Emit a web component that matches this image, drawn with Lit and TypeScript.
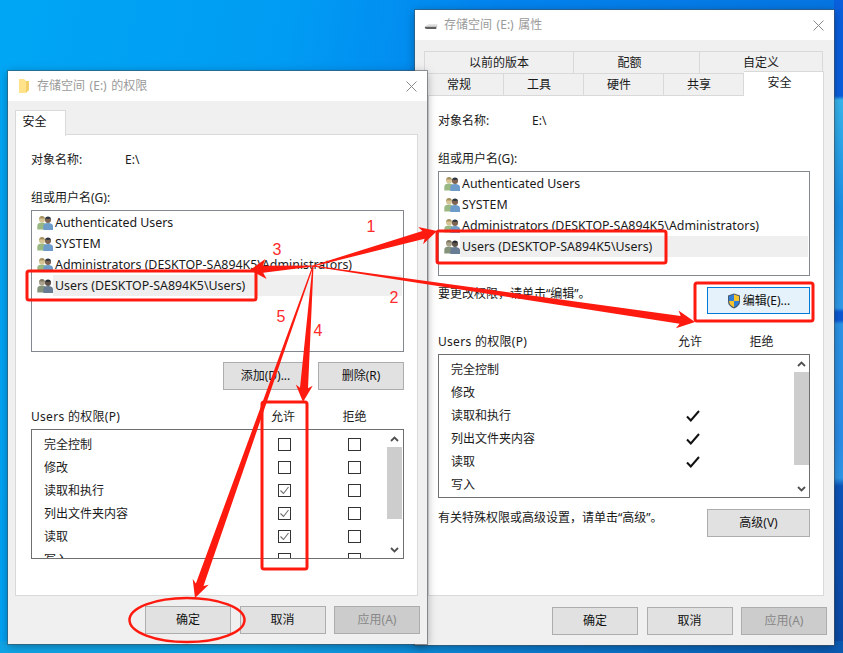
import { LitElement, html, css } from "lit";
import { customElement } from "lit/decorators.js";

const RED = "#ff1a0f";

function arrow(x0: number, y0: number, x1: number, y1: number, shaft: number, head: number, len: number, start = 1) {
  const d = Math.hypot(x1 - x0, y1 - y0);
  const ux = (x1 - x0) / d, uy = (y1 - y0) / d;
  const nx = -uy, ny = ux;
  const bx = x1 - ux * len, by = y1 - uy * len;
  const cx = x1 - ux * (len + 3), cy = y1 - uy * (len + 3);
  const p = [
    [x0 + nx * start / 2, y0 + ny * start / 2],
    [bx + nx * shaft / 2, by + ny * shaft / 2],
    [cx + nx * head / 2, cy + ny * head / 2],
    [x1, y1],
    [cx - nx * head / 2, cy - ny * head / 2],
    [bx - nx * shaft / 2, by - ny * shaft / 2],
    [x0 - nx * start / 2, y0 - ny * start / 2],
  ];
  return p.map((q) => q[0].toFixed(1) + "," + q[1].toFixed(1)).join(" ");
}

const groupIcon = (sel: boolean) => html`<svg class="uicon ${sel ? "dim" : ""}" viewBox="0 0 16 16">
  <circle cx="5" cy="4.500" r="3" fill="#d8c596"/>
  <path d="M2.200 4.500C2 2 3.500 1 5 1s3 1 2.800 3.500L7 3.200C6 3.600 4 3.600 3 3.200z" fill="#a3905f"/>
  <path d="M0.300 14.500V11c0-2.500 2-3.400 4.700-3.400S9.500 8.500 9.500 11v3.500z" fill="#9ab884"/>
  <circle cx="11" cy="5" r="3" fill="#7d6350"/>
  <path d="M8 5C7.800 2.400 9.400 1.400 11 1.400s3.200 1 3 3.600l-.8-1.400c-1.200.4-3.200.4-4.400 0z" fill="#2c3540"/>
  <path d="M6.300 15v-3.500c0-2.600 2-3.500 4.700-3.500s5 .9 5 3.500V15z" fill="#6d9ccb"/>
</svg>`;

const xIcon = html`<svg class="close" viewBox="0 0 11 11"><path d="M.5.5l10 10M10.500.5l-10 10" stroke="#8a8a8a" fill="none"/></svg>`;
const folderIcon = html`<svg class="ticon" viewBox="0 0 12 16"><path d="M1 1h5l2 2v12H1z" fill="#ffe28a"/><path d="M8 3h3v9l-3 3z" fill="#f3cf6a"/></svg>`;
const driveIcon = html`<svg class="ticon" viewBox="0 0 16 16"><path d="M1 10l4-3h10l-1 3z" fill="#dcdcdc"/><path d="M1 10h13v2.500H3l-2-.8z" fill="#5f5f5f"/><path d="M14 10l1-3v2.800l-1 2.700z" fill="#b0b0b0"/></svg>`;
const shield = html`<svg class="shield" viewBox="0 0 14 16">
  <path d="M7 .5L1 2.500v6c0 3.500 3 5.800 6 7 3-1.200 6-3.500 6-7v-6z" fill="#4a5a70"/>
  <path d="M7 1.500L2 3.200V8h5z" fill="#2f7fd6"/><path d="M7 1.500l5 1.700V8H7z" fill="#f7c52b"/>
  <path d="M2 8h5v6.300C4.500 13.200 2.200 11.200 2 8z" fill="#f7c52b"/><path d="M12 8H7v6.300c2.500-1.100 4.800-3.100 5-6.300z" fill="#2f7fd6"/>
</svg>`;
const chevUp = html`<svg class="chev" viewBox="0 0 9 6"><path d="M1 5l3.500-3.500L8 5" fill="none" stroke="#505050" stroke-width="1.800"/></svg>`;
const chevDown = html`<svg class="chev" viewBox="0 0 9 6"><path d="M1 1l3.500 3.500L8 1" fill="none" stroke="#505050" stroke-width="1.800"/></svg>`;
const softCheck = html`<svg viewBox="0 0 11 11" class="tick"><path d="M1.500 5.500l3 3 5-6.500" fill="none" stroke="#6e6e6e" stroke-width="1.100"/></svg>`;
const blackCheck = html`<svg viewBox="0 0 14 12" class="bcheck"><path d="M1 6.500l3.800 4L13 1" fill="none" stroke="#111" stroke-width="2"/></svg>`;

const users = ["Authenticated Users", "SYSTEM", "Administrators (DESKTOP-SA894K5\\Administrators)", "Users (DESKTOP-SA894K5\\Users)"];
const perms = ["完全控制", "修改", "读取和执行", "列出文件夹内容", "读取", "写入"];
const allowed = [false, false, true, true, true, false];

const userList = () => html`<div class="ulist">
  ${users.map((u, i) => html`<div class="urow">${groupIcon(i === 3)}<span class="uname ${i === 3 ? "sel" : ""}">${u}</span></div>`)}
</div>`;

const permHead = html`<div class="phead"><span class="pt">Users 的权限(P)</span><span class="c">允许</span><span class="c">拒绝</span></div>`;
const scrollbar = (cls: string) => html`<div class="sb ${cls}"><div class="sba">${chevUp}</div><div class="thumb"></div><div class="sbs"></div><div class="sba">${chevDown}</div></div>`;

const footer = html`<div class="foot"><button class="b f">确定</button><button class="b f">取消</button><button class="b f dis">应用(A)</button></div>`;

@customElement("app-root")
export class AppRoot extends LitElement {
  static styles = css`
    :host { display: block; position: relative; width: 843px; height: 653px; overflow: hidden;
      font: 12px/16px "Noto Sans", "Noto Sans CJK SC", sans-serif; color: #1a1a1a;
      background:
        linear-gradient(180deg, #0a5fdc 0 96px, #37b6ee 100px, #1a8fe6 210px, #2f9bea 308px, #0a58d4 312px, #0a58d4 320px, #2b95e8 324px, #2b8de8 440px, #2f97e8 478px, #0d55bb 486px, #0b4aa6 640px, #0b4aa6) right top / 9px 100% no-repeat,
        linear-gradient(100deg, #00a6f4 0%, #009cf3 30%, #0383ee 52%, #0770dc 100%); }
    .bottomglow { position: absolute; left: 0; right: 0; bottom: 0; height: 12px;
      background: linear-gradient(90deg, #10a4e6 0 30%, #0b7fd4 60%, #0a5ab2 100%); }
    .win { position: absolute; width: 419px; display: flex; flex-direction: column; background: #f0f0f0;
      box-shadow: 0 0 0 1px rgba(70,80,90,.55), 0 2px 9px rgba(0,0,0,.35); }
    .w1 { left: 415px; top: 10px; height: 635px; }
    .w2 { left: 8px; top: 71px; height: 573px; }
    .tbar { height: 30px; flex: none; background: #fff; display: flex; align-items: center; color: #9a9a9a; padding: 0 9px; gap: 6px; }
    .tbar .t { flex: 1; word-spacing: 1.500px; }
    .ticon { width: 14px; height: 16px; flex: none; }
    .close { width: 11px; height: 11px; flex: none; margin-right: 1px; }

    .tabs { margin-top: 9px; padding-left: 7px; display: flex; height: 25px; flex: none; }
    .tab { width: 51px; background: #fff; border: 1px solid #d9d9d9; border-bottom: 0; box-sizing: border-box; display: flex; align-items: center; justify-content: center; padding: 0 12px 4px 0; color: #111; z-index: 1; height: 26px; }
    .tabs1 { margin: 11px 0 0 9px; flex: none; }
    .trow { display: flex; }
    .t1 { height: 22px; background: #f0f0f0; border: 1px solid #d9d9d9; border-bottom: 0; border-right: 0; box-sizing: border-box; display: flex; align-items: center; justify-content: center; }
    .t2 { width: 80px; height: 23px; background: #f0f0f0; border: 1px solid #d9d9d9; border-left: 0; box-sizing: border-box; display: flex; align-items: center; justify-content: center; padding-right: 9px; }
    .t2.on { background: #fff; height: 25px; margin-top: -2px; z-index: 1; border-bottom: 0; padding: 0 8px 3px 0; }
    .w1w { width: 149px; } .w2w { width: 126px; padding-right: 14px; } .w3w { width: 124px; border-right: 1px solid #d9d9d9; }

    .panel { background: #fff; border: 1px solid #d9d9d9; box-sizing: border-box; padding: 17px 13px 0 15px; }
    .w2 .panel { margin: -1px 0 0 7px; width: 403px; height: 462px; }
    .w1 .panel { margin: -1px 0 0 13px; width: 396px; height: 501px; padding-left: 9px; }
    .obj { display: flex; }
    .obj span:first-child { width: 94px; }
    .lab { margin-top: 22px; }

    .ulist { margin-top: 4px; border: 1px solid #828790; padding: 1px; box-sizing: border-box; height: 142px; }
    .w1 .ulist { height: 105px; }
    .urow { height: 21px; display: flex; align-items: center; padding-left: 4px; }
    .uicon { width: 16px; height: 16px; flex: none; }
    .uicon.dim { filter: grayscale(.45) brightness(.82); }
    .uname { flex: 1; height: 21px; line-height: 21px; padding-left: 2px; white-space: nowrap; font-size: 12.400px; }
    .uname.sel { background: #efefef; }

    .b { font: inherit; color: #111; background: #e1e1e1; border: 1px solid #adadad; box-sizing: border-box; height: 28px; padding: 0; display: flex; align-items: center; justify-content: center; gap: 2px; }
    .btns { margin-top: 10px; display: flex; justify-content: flex-end; gap: 10px; }
    .btns .b { width: 85px; }
    .btns .b.wide { width: 86px; }
    .b.f { width: 86px; }
    .b.dis { background: #ccc; color: #888; }
    .b.side { width: 103px; }
    .b.blue { background: #e5f1fb; border-color: #0078d7; height: 27px; }
    .shield { width: 14px; height: 16px; }

    .phead { display: grid; grid-template-columns: 217px 70px 73px; margin-top: 19px; }
    .w1 .phead { margin-top: 20px; }
    .pt { letter-spacing: .3px; white-space: nowrap; }
    .c { text-align: center; }
    .pbox { margin-top: 4px; border: 1px solid #6f6f6f; box-sizing: border-box; height: 130px; display: flex; overflow: hidden; }
    .w1 .pbox { margin-top: 4px; height: 144px; }
    .prows { width: 355px; flex: none; padding-top: 3px; overflow: hidden; }
    .prow { height: 23px; display: grid; grid-template-columns: 217px 70px 68px; align-items: center; }
    .pn { padding-left: 12px; line-height: 23px; }
    .pc { display: flex; justify-content: center; align-items: center; }
    .pc.deny { padding-left: 2px; }
    .box { width: 13px; height: 13px; border: 1px solid #333; box-sizing: border-box; background: #fff; display: flex; align-items: center; justify-content: center; }
    .tick { width: 11px; height: 11px; }
    .bcheck { width: 14px; height: 12px; margin-left: 4px; }

    .sb { width: 15px; flex: none; display: flex; flex-direction: column; background: #fff; margin-top: 1px; }
    .sba { height: 16px; display: flex; align-items: center; justify-content: center; flex: none; }
    .chev { width: 9px; height: 6px; }
    .thumb { background: #cdcdcd; flex: none; height: 72px; }
    .sb.big .thumb { height: 93px; }
    .sbs { flex: 1; }

    .note { display: flex; justify-content: space-between; margin-top: 11px; }
    .note > span { margin-top: -1px; }
    .note.adv > span { margin-top: 1px; }
    .foot { display: flex; justify-content: flex-end; gap: 8.500px; padding-right: 7px; margin-top: 10px; }
    .w1 .foot { margin-top: 11px; }

    .ink { position: absolute; left: 0; top: 0; width: 843px; height: 653px; pointer-events: none; }
    .ink text { fill: #ff2a2a; font: 16px "Liberation Sans", sans-serif; text-anchor: middle; }
  `;

  private perm(tick: unknown, boxed: boolean) {
    return html`<div class="prows">
      ${perms.map((p, i) => html`<div class="prow"><span class="pn">${p}</span>
        ${boxed
          ? html`<span class="pc"><span class="box">${allowed[i] ? tick : ""}</span></span><span class="pc deny"><span class="box"></span></span>`
          : html`<span class="pc">${allowed[i] ? tick : ""}</span><span></span>`}
      </div>`)}
    </div>`;
  }

  render() {
    return html`
      <div class="bottomglow"></div>
      <section class="win w1">
        <div class="tbar">${driveIcon}<span class="t">存储空间 (E:) 属性</span>${xIcon}</div>
        <div class="tabs1">
          <div class="trow"><span class="t1 w1w">以前的版本</span><span class="t1 w2w">配额</span><span class="t1 w3w">自定义</span></div>
          <div class="trow">${["常规", "工具", "硬件", "共享"].map((t) => html`<span class="t2">${t}</span>`)}<span class="t2 on">安全</span></div>
        </div>
        <div class="panel">
          <div class="obj"><span>对象名称:</span><span>E:\\</span></div>
          <div class="lab">组或用户名(G):</div>
          ${userList()}
          <div class="note"><span>要更改权限，请单击“编辑”。</span><button class="b side blue">${shield}编辑(E)...</button></div>
          ${permHead}
          <div class="pbox">${this.perm(blackCheck, false)}${scrollbar("big")}</div>
          <div class="note adv"><span>有关特殊权限或高级设置，请单击“高级”。</span><button class="b side">高级(V)</button></div>
        </div>
        ${footer}
      </section>

      <section class="win w2">
        <div class="tbar">${folderIcon}<span class="t">存储空间 (E:) 的权限</span>${xIcon}</div>
        <div class="tabs"><span class="tab">安全</span></div>
        <div class="panel">
          <div class="obj"><span>对象名称:</span><span>E:\\</span></div>
          <div class="lab">组或用户名(G):</div>
          ${userList()}
          <div class="btns"><button class="b">添加(D)...</button><button class="b wide">删除(R)</button></div>
          ${permHead}
          <div class="pbox">${this.perm(softCheck, true)}${scrollbar("")}</div>
        </div>
        ${footer}
      </section>

      <svg class="ink" viewBox="0 0 843 653">
        <g fill="${RED}">
          <polygon points="${arrow(313, 266, 437, 231, 8, 18, 14)}"></polygon>
          <polygon points="${arrow(313, 266, 695, 322, 8, 18, 15)}"></polygon>
          <polygon points="${arrow(313, 266, 250, 270, 7, 20, 13)}"></polygon>
          <polygon points="${arrow(313, 266, 303, 402, 8, 17, 14)}"></polygon>
          <polygon points="${arrow(313, 266, 195, 598, 8, 17, 14)}"></polygon>
        </g>
        <g fill="none" stroke="${RED}" stroke-width="3" stroke-linejoin="round">
          <rect x="27" y="271" width="229" height="29" rx="2"></rect>
          <rect x="437" y="231" width="229" height="32" rx="2"></rect>
          <rect x="695" y="283" width="118" height="38" rx="2"></rect>
          <rect x="262" y="402" width="45" height="167" rx="2"></rect>
          <ellipse cx="187" cy="620" rx="57.500" ry="22" stroke-width="2.500"></ellipse>
        </g>
        <text x="371" y="232">1</text>
        <text x="394" y="303">2</text>
        <text x="277" y="255">3</text>
        <text x="318" y="336">4</text>
        <text x="281" y="322">5</text>
      </svg>
    `;
  }
}
